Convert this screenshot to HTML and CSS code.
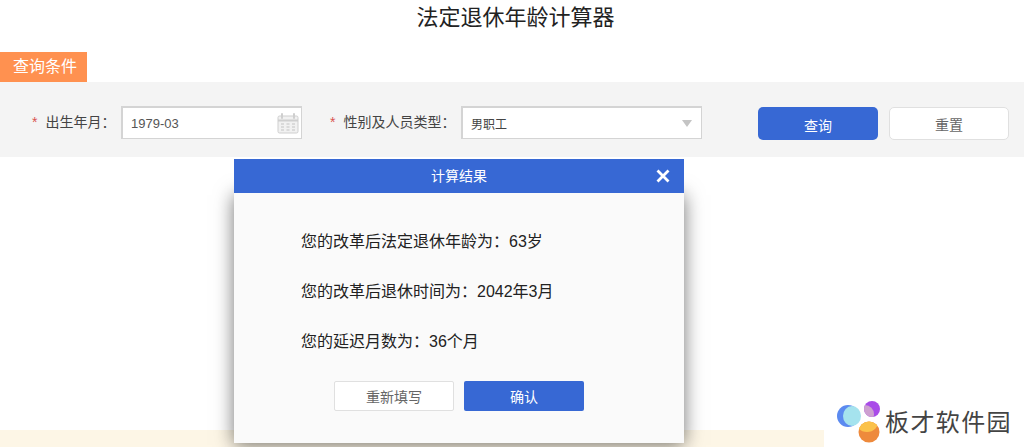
FILE: index.html
```html
<!DOCTYPE html>
<html lang="zh-CN">
<head>
    <meta charset="UTF-8">
    <meta name="viewport" content="width=device-width, initial-scale=1.0">
    <title>法定退休年龄计算器</title>
    <link rel="stylesheet" href="styles.css">
</head>
<body>
    <h1 class="page-title">法定退休年龄计算器</h1>

    <div class="tab-title">查询条件</div>

    <div class="search-bar">
        <div class="field field-date">
            <label><span class="star">*</span>出生年月：</label>
            <div class="input-box">
                <span>1979-03</span>
                <svg class="calendar-icon" width="22" height="21" viewBox="0 0 22 21">
                    <rect x="1" y="3" width="20" height="17" rx="1.5" fill="#f1f1f1" stroke="#cfcfcf"/>
                    <path d="M1 7.5h20" stroke="#cfcfcf" stroke-width="2"/>
                    <path d="M5 1v4M17 1v4" stroke="#cfcfcf" stroke-width="2" stroke-linecap="round"/>
                    <path d="M4 11h3M9.500 11h3M15 11h3M4 14h3M9.500 14h3M15 14h3M4 17h3M9.500 17h3M15 17h3" stroke="#d2d2d2" stroke-width="1.500"/>
                </svg>
            </div>
        </div>
        <div class="field field-type">
            <label><span class="star">*</span>性别及人员类型：</label>
            <div class="input-box select-box">
                <span>男职工</span>
                <i class="arrow"></i>
            </div>
        </div>
        <div class="btn-group">
            <button class="btn btn-primary btn-search">查询</button>
            <button class="btn btn-plain btn-search">重置</button>
        </div>
    </div>

    <div class="notice-band"></div>

    <div class="modal">
        <div class="modal-head">
            <span>计算结果</span>
            <svg class="close-icon" width="16" height="16" viewBox="0 0 16 16">
                <path d="M2.500 2.500l11 11M13.500 2.500l-11 11" stroke="#fff" stroke-width="2.800"/>
            </svg>
        </div>
        <div class="modal-body">
            <p>您的改革后法定退休年龄为：63岁</p>
            <p>您的改革后退休时间为：2042年3月</p>
            <p>您的延迟月数为：36个月</p>
            <div class="modal-btns">
                <button class="btn btn-plain btn-modal">重新填写</button>
                <button class="btn btn-primary btn-modal">确认</button>
            </div>
        </div>
    </div>

    <div class="watermark">
        <svg width="46" height="42" viewBox="0 0 46 42">
            <defs>
                <clipPath id="logo-purple"><circle cx="37" cy="8" r="8"/></clipPath>
                <clipPath id="logo-orange"><circle cx="34" cy="31" r="10.500"/></clipPath>
            </defs>
            <circle cx="13" cy="15" r="11" fill="#5b8af0"/>
            <ellipse cx="17" cy="15" rx="9" ry="10" fill="#a5e3ee"/>
            <circle cx="37" cy="8" r="8" fill="#a94be8"/>
            <circle cx="30" cy="13" r="9" fill="#cda0d0" clip-path="url(#logo-purple)"/>
            <circle cx="34" cy="31" r="10.500" fill="#ee8a3c"/>
            <circle cx="32" cy="19" r="12" fill="#fbc24a" clip-path="url(#logo-orange)"/>
        </svg>
        <span class="watermark-text">板才软件园</span>
    </div>
</body>
</html>
```

FILE: styles.css
```css
* {
    box-sizing: border-box;
}

html, body {
    height: 447px;
    overflow: hidden;
}

body {
    margin: 0;
    position: relative;
    background-color: #fff;
    color: #333;
    font-family: "Liberation Sans", "Noto Sans CJK SC", sans-serif;
    font-size: 14px;
}

.page-title {
    margin: 0;
    height: 52px;
    padding: 3px 0 0 7px;
    line-height: 30px;
    text-align: center;
    font-size: 22px;
    font-weight: normal;
    color: #222;
}

.tab-title {
    width: 87px;
    height: 30px;
    line-height: 30px;
    padding-left: 13px;
    background-color: #ff9150;
    color: #fff;
    font-size: 16px;
    white-space: nowrap;
}

.search-bar {
    display: flex;
    align-items: flex-start;
    height: 75px;
    padding: 24px 15px 0 32px;
    background-color: #f4f4f4;
}

.field {
    display: flex;
    align-items: center;
    height: 33px;
}

.field label {
    color: #444;
    position: relative;
    top: -2px;
    white-space: nowrap;
}

.field-date label {
    width: 89px;
}

.field-type {
    margin-left: 28px;
}

.field-type label {
    width: 131px;
}

.star {
    color: #d9534f;
    margin-right: 8px;
}

.input-box {
    display: flex;
    align-items: center;
    justify-content: space-between;
    height: 33px;
    background-color: #fff;
    border: 1px solid #d4d4d4;
    border-top-width: 2px;
    border-left-width: 2px;
    color: #555;
    font-size: 13px;
    padding: 1px 2px 0 8px;
}

.field-date .input-box {
    width: 181px;
}

.select-box {
    width: 241px;
    color: #444;
    padding-right: 9px;
}

.select-box span {
    font-size: 12px;
}

.arrow {
    width: 0;
    height: 0;
    border-left: 5px solid transparent;
    border-right: 5px solid transparent;
    border-top: 7px solid #c4c4c4;
}

.btn-group {
    display: flex;
    gap: 11px;
    margin-left: 56px;
    margin-top: 1px;
}

.btn {
    border: none;
    padding: 0;
    cursor: pointer;
    font-family: inherit;
    font-size: 14px;
}

.btn-primary {
    background-color: #3768d4;
    color: #fff;
}

.btn-plain {
    background-color: #fff;
    border: 1px solid #e0e0e0;
    color: #666;
}

.btn-search {
    width: 120px;
    height: 33px;
    border-radius: 5px;
    padding-top: 3px;
}

.btn-search.btn-plain {
    padding-top: 1px;
}

.notice-band {
    position: absolute;
    left: 0;
    top: 430px;
    width: 824px;
    height: 17px;
    background-color: #fdf6e6;
}

.modal {
    position: absolute;
    left: 234px;
    top: 159px;
    width: 450px;
    height: 284px;
}

.modal-head {
    position: relative;
    z-index: 1;
    height: 34px;
    line-height: 34px;
    text-align: center;
    background-color: #3768d4;
    color: #fff;
}

.close-icon {
    position: absolute;
    right: 13px;
    top: 9px;
}

.modal-body {
    height: 250px;
    padding: 39px 0 0 67px;
    background-color: #fafafa;
    box-shadow: 0 2px 18px rgba(0,0,0,0.55);
    color: #222;
    font-size: 16px;
}

.modal-body p {
    margin: 0 0 30px;
    line-height: 20px;
}

.modal-body p:last-of-type {
    margin-bottom: 29px;
}

.modal-btns {
    display: flex;
    gap: 10px;
    margin-left: 33px;
}

.btn-modal {
    width: 120px;
    height: 30px;
    border-radius: 2px;
}

.watermark {
    position: absolute;
    left: 835px;
    top: 397px;
    display: flex;
    align-items: center;
    gap: 4px;
    width: 189px;
    height: 50px;
    background-color: #fff;
    color: #444;
    font-size: 24px;
    letter-spacing: 1.4px;
    white-space: nowrap;
}

.watermark-text {
    margin-bottom: 4px;
}
```
